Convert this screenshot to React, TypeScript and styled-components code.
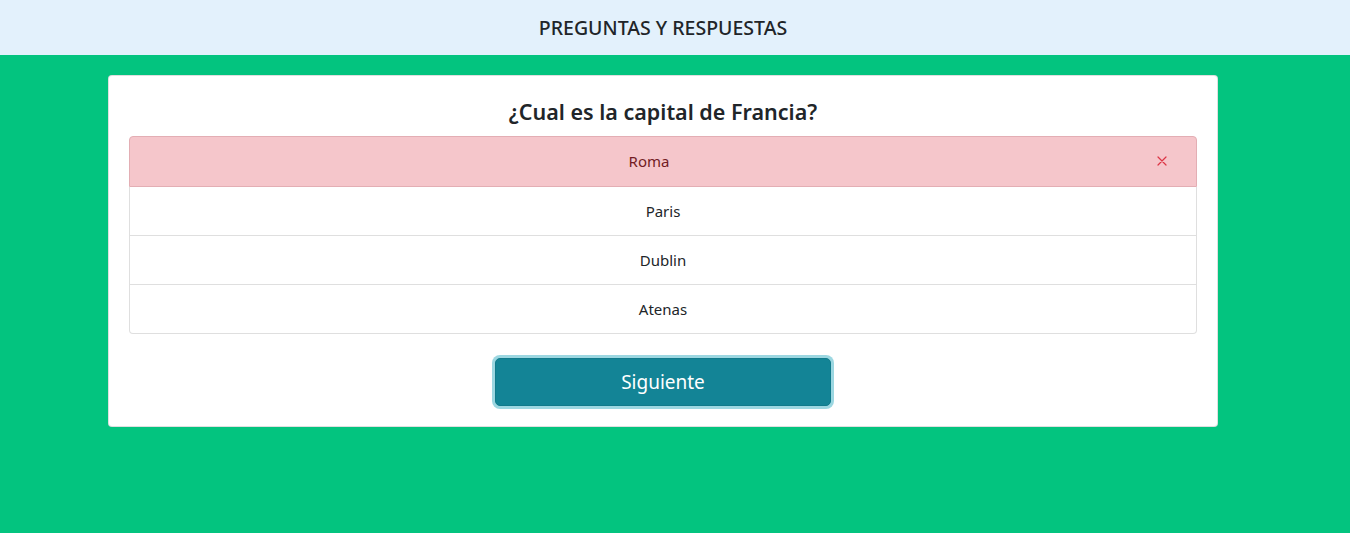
import React from "react";
import styled, { createGlobalStyle } from "styled-components";

const Global = createGlobalStyle`
  html, body { margin: 0; padding: 0; }
  body {
    background: #03c47f;
    font-family: "Segoe UI", "Noto Sans", "Open Sans", sans-serif;
    color: #212529;
    min-height: 533px;
  }
`;

const Header = styled.header`
  height: 55px;
  background: #e3f1fc;
  display: flex;
  align-items: center;
  justify-content: center;
  padding-right: 24px;
`;

const HeaderTitle = styled.h1`
  margin: 0;
  font-size: 19.5px;
  font-weight: 500;
  color: #212529;
`;

const Main = styled.main`
  display: flex;
  justify-content: center;
  padding-top: 20px;
  padding-right: 24px;
`;

const Card = styled.section`
  width: 1068px;
  background: #fff;
  border: 1px solid rgba(0, 0, 0, 0.125);
  border-radius: 4px;
  padding: 20px;
  display: flex;
  flex-direction: column;
  align-items: stretch;
`;

const Question = styled.h2`
  margin: 1px 0 10px;
  font-size: 21.5px;
  line-height: 29px;
  font-weight: 600;
  text-align: center;
  color: #212529;
`;

const List = styled.ul`
  list-style: none;
  margin: 0;
  padding: 0;
  border-radius: 4px;
  display: flex;
  flex-direction: column;
`;

const Item = styled.li<{ $wrong?: boolean }>`
  display: flex;
  align-items: center;
  padding: 12px 20px ${(p) => (p.$wrong ? "13px" : "12px")};
  height: 24px;
  font-size: 15px;
  line-height: 24px;
  border: 1px solid ${(p) => (p.$wrong ? "#e3aeb4" : "rgba(0,0,0,0.125)")};
  background: ${(p) => (p.$wrong ? "#f5c6cb" : "#fff")};
  color: ${(p) => (p.$wrong ? "#721c24" : "#212529")};
  & + & { border-top-width: 0; }
  &:first-child { border-top-left-radius: 4px; border-top-right-radius: 4px; }
  &:last-child { border-bottom-left-radius: 4px; border-bottom-right-radius: 4px; }
`;

const ItemText = styled.span`
  flex: 1;
  text-align: center;
`;

const Mark = styled.span`
  width: 28px;
  display: flex;
  justify-content: center;
  align-items: center;
`;

const Footer = styled.div`
  display: flex;
  justify-content: center;
  margin-top: 24px;
`;

const NextButton = styled.button`
  width: 336px;
  height: 48px;
  background: #138496;
  border: 1px solid #117a8b;
  border-radius: 5px;
  color: #fff;
  font-family: inherit;
  font-size: 19px;
  line-height: 30px;
  box-shadow: 0 0 0 3px rgba(58, 176, 195, 0.5);
  cursor: pointer;
`;

const XIcon = () => (
  <svg width="10" height="10" viewBox="0 0 10 10" fill="none">
    <path d="M1 1L9 9M9 1L1 9" stroke="#dc3545" strokeWidth="1.2" strokeLinecap="round" />
  </svg>
);

const answers = [
  { text: "Roma", wrong: true },
  { text: "Paris" },
  { text: "Dublin" },
  { text: "Atenas" },
];

export default function App() {
  return (
    <>
      <Global />
      <Header>
        <HeaderTitle>PREGUNTAS Y RESPUESTAS</HeaderTitle>
      </Header>
      <Main>
        <Card>
          <Question>¿Cual es la capital de Francia?</Question>
          <List>
            {answers.map((a) => (
              <Item key={a.text} $wrong={a.wrong}>
                <ItemText>{a.text}</ItemText>
                {a.wrong && (
                  <Mark>
                    <XIcon />
                  </Mark>
                )}
              </Item>
            ))}
          </List>
          <Footer>
            <NextButton>Siguiente</NextButton>
          </Footer>
        </Card>
      </Main>
    </>
  );
}
